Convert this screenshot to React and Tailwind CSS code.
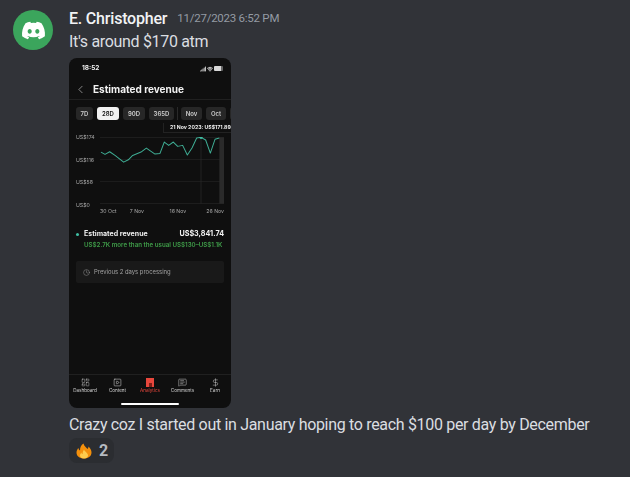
import React from 'react';
import { FaDiscord } from 'react-icons/fa';
import { ChevronLeft, LayoutDashboard, SquarePlay, MessageSquareText, DollarSign, Clock, Wifi, Signal } from 'lucide-react';

const line = '108,82 120,89 134,81 150,92 176,112 190,105 203,92 228,82 244,70 270,88 285,86 298,52 311,62 325,52 338,65 353,62 367,91 381,70 395,40 408,38 422,46 436,85 450,44 463,40';

const Chip = ({ label, active, w }) => (
  <div
    className={`h-[13px] shrink-0 rounded-[3px] flex items-center justify-center text-[6px] font-semibold ${w} ${
      active ? 'bg-[#f1f1f1] text-[#111111]' : 'bg-[#272727] text-[#cfcfcf]'
    }`}
  >
    {label}
  </div>
);

const NavItem = ({ icon, label, active }) => (
  <div className={`w-[32px] flex flex-col items-center gap-[1px] text-[4.6px] leading-[6px] ${active ? 'text-[#e8473c]' : 'text-[#d5d5d5]'}`}>
    {icon}
    <span className="whitespace-nowrap">{label}</span>
  </div>
);

const PhoneShot = () => (
  <div className="relative w-[162px] h-[350px] rounded-[8px] bg-[#0f0f0f] overflow-hidden flex flex-col font-['Inter',sans-serif] text-white blur-[0.25px]">
    {/* Status bar */}
    <div className="h-[21px] shrink-0 pl-[13px] pr-[8px] flex items-center justify-between">
      <span className="text-[6.5px] font-bold text-[#eeeeee]">18:52</span>
      <div className="flex items-center gap-[1px] text-white">
        <Signal size={6} strokeWidth={3} />
        <Wifi size={6} strokeWidth={3} />
        <div className="w-[9px] h-[5px] rounded-[1px] bg-[#d8d8d8] border-r-2 border-[#666666]" />
      </div>
    </div>

    {/* Header */}
    <div className="h-[21px] shrink-0 pl-[5px] pt-[1px] flex items-center gap-[6px] border-b border-[#202020]">
      <ChevronLeft size={13} strokeWidth={1.2} className="text-[#c4c4c4]" />
      <span className="text-[10px] font-bold text-[#f2f2f2]">Estimated revenue</span>
    </div>

    {/* Period chips */}
    <div className="h-[27px] shrink-0 pl-[7px] flex items-center gap-[4px] overflow-hidden">
      <Chip label="7D" w="w-[17px]" />
      <Chip label="28D" active w="w-[22px]" />
      <Chip label="90D" w="w-[22px]" />
      <Chip label="365D" w="w-[25px]" />
      <div className="w-px h-[13px] shrink-0 bg-[#2a2a2a] -mx-[1px]" />
      <Chip label="Nov" w="w-[21px]" />
      <Chip label="Oct" w="w-[20px]" />
      <Chip label="" w="w-[20px]" />
    </div>

    {/* Chart */}
    <div className="relative h-[68px] mt-[10px] shrink-0 pl-[7px] pr-[7px] flex">
      <div className="w-[24px] shrink-0 flex flex-col justify-between text-[5.2px] leading-[6px] text-[#a8a8a8] -my-[3px]">
        <span>US$174</span>
        <span>US$116</span>
        <span>US$58</span>
        <span>US$0</span>
      </div>
      <svg viewBox="105 37 372 200" preserveAspectRatio="none" className="w-[124px] h-[67px]">
        <line x1="105" x2="477" y1="38" y2="38" stroke="#2a2a2a" strokeWidth="2" />
        <line x1="105" x2="477" y1="104" y2="104" stroke="#262626" strokeWidth="2" />
        <line x1="105" x2="477" y1="170" y2="170" stroke="#262626" strokeWidth="2" />
        <line x1="105" x2="477" y1="236" y2="236" stroke="#2a2a2a" strokeWidth="2" />
        <rect x="463" y="38" width="14" height="198" fill="#2a2a2a" />
        <line x1="408" x2="408" y1="38" y2="236" stroke="#2c2c2c" strokeWidth="2" />
        <polyline points={line} fill="none" stroke="#3fae95" strokeWidth="3" strokeLinejoin="round" />
        <circle cx="408" cy="38" r="5" fill="#3fbfa3" />
      </svg>
      {/* Tooltip */}
      <div className="absolute left-[94px] -top-[14px] w-[80px] h-[10px] pl-[6px] border-b border-l border-[#222222] text-[5.2px] leading-[9px] font-bold text-[#eeeeee] whitespace-nowrap">
        21 Nov 2023: US$171.89
      </div>
    </div>
    <div className="h-[12px] mt-[1px] shrink-0 ml-[31px] w-[124px] flex items-center text-[5.2px] text-[#a8a8a8]">
      <span className="w-[30px]">30 Oct</span>
      <span className="w-[40px]">7 Nov</span>
      <span className="w-[37px]">16 Nov</span>
      <span className="whitespace-nowrap">26 Nov</span>
    </div>

    {/* Legend */}
    <div className="mt-[12px] shrink-0 pl-[7px] pr-[7px]">
      <div className="flex items-center text-[7px] font-bold leading-[8px]">
        <span className="w-[3px] h-[3px] rounded-full bg-[#3fbfa3] mr-[5px]" />
        <span className="text-[#eeeeee]">Estimated revenue</span>
        <span className="ml-auto text-[#f2f2f2] text-[7.2px]">US$3,841.74</span>
      </div>
      <div className="mt-[3px] ml-[8px] text-[6.2px] leading-[8px] font-semibold text-[#3f9d49] whitespace-nowrap">
        US$2.7K more than the usual US$130–US$1.1K
      </div>
    </div>

    {/* Processing note */}
    <div className="mt-[12px] mx-[7px] h-[22px] shrink-0 rounded-[2px] bg-[#191919] pl-[7px] flex items-center gap-[4px] text-[5.9px] text-[#a3a3a3]">
      <Clock size={7} strokeWidth={1.5} />
      <span>Previous 2 days processing</span>
    </div>

    {/* Bottom nav */}
    <div className="mt-auto h-[34px] shrink-0 border-t border-[#202020] pt-[3px] flex justify-between">
      <NavItem icon={<LayoutDashboard size={9} strokeWidth={1.2} />} label="Dashboard" />
      <NavItem icon={<SquarePlay size={9} strokeWidth={1.4} />} label="Content" />
      <NavItem
        active
        label="Analytics"
        icon={
          <div className="w-[8px] h-[9px] bg-[#e8473c] flex items-end justify-center">
            <div className="w-[3px] h-[4px] bg-[#7c1f18]" />
          </div>
        }
      />
      <NavItem icon={<MessageSquareText size={9} strokeWidth={1.3} />} label="Comments" />
      <NavItem icon={<DollarSign size={9} strokeWidth={1.3} />} label="Earn" />
    </div>
    <div className="absolute bottom-[3px] left-[52px] w-[58px] h-[2px] rounded-full bg-white" />
  </div>
);

const FireEmoji = () => (
  <svg viewBox="0 0 32 32" className="w-[16px] h-[16px]">
    <path d="M15 1c1 5 5 7 8 11 1-1 2-3 2-5 4 4 6 8 6 12 0 7-6 12-15 12S1 26 1 19c0-4 2-7 4-9 0 2 1 4 3 5C8 9 10 4 15 1z" fill="#f4900c" />
    <path d="M16 13c1 4 8 7 8 12 0 4-4 6-8 6s-8-2-8-6c0-3 2-5 3-6 0 2 1 3 2 3 0-3 1-6 3-9z" fill="#ffcc4d" />
  </svg>
);

const App = () => (
  <div className="w-[630px] h-[477px] bg-[#313338] overflow-hidden flex pl-[13px] pt-[8px] font-['Roboto',sans-serif]">
    <div className="w-[40px] h-[40px] mt-[2px] mr-[16px] shrink-0 rounded-full bg-[#3ba55c] flex items-center justify-center">
      <FaDiscord size={25} className="text-white" />
    </div>
    <div className="flex flex-col items-start">
      <div className="h-[22px] flex items-center whitespace-nowrap">
        <span className="text-[16px] font-medium text-[#f2f3f5] tracking-[-0.2px]">E. Christopher</span>
        <span className="ml-[10px] text-[11.5px] text-[#949ba4] tracking-[-0.25px]">11/27/2023 6:52 PM</span>
      </div>
      <p className="mt-[1px] h-[22px] leading-[22px] text-[16px] text-[#dbdee1] tracking-[-0.32px] whitespace-nowrap">It's around $170 atm</p>
      <div className="mt-[5px]">
        <PhoneShot />
      </div>
      <p className="mt-[6px] h-[22px] leading-[22px] text-[16px] text-[#dbdee1] tracking-[-0.32px] whitespace-nowrap">
        Crazy coz I started out in January hoping to reach $100 per day by December
      </p>
      <div className="mt-[2px] w-[45px] h-[25px] rounded-[8px] bg-[#2b2d31] flex items-center pl-[7px] gap-[7px]">
        <FireEmoji />
        <span className="text-[16px] font-bold text-[#b5bac1]">2</span>
      </div>
    </div>
  </div>
);

export default App;
